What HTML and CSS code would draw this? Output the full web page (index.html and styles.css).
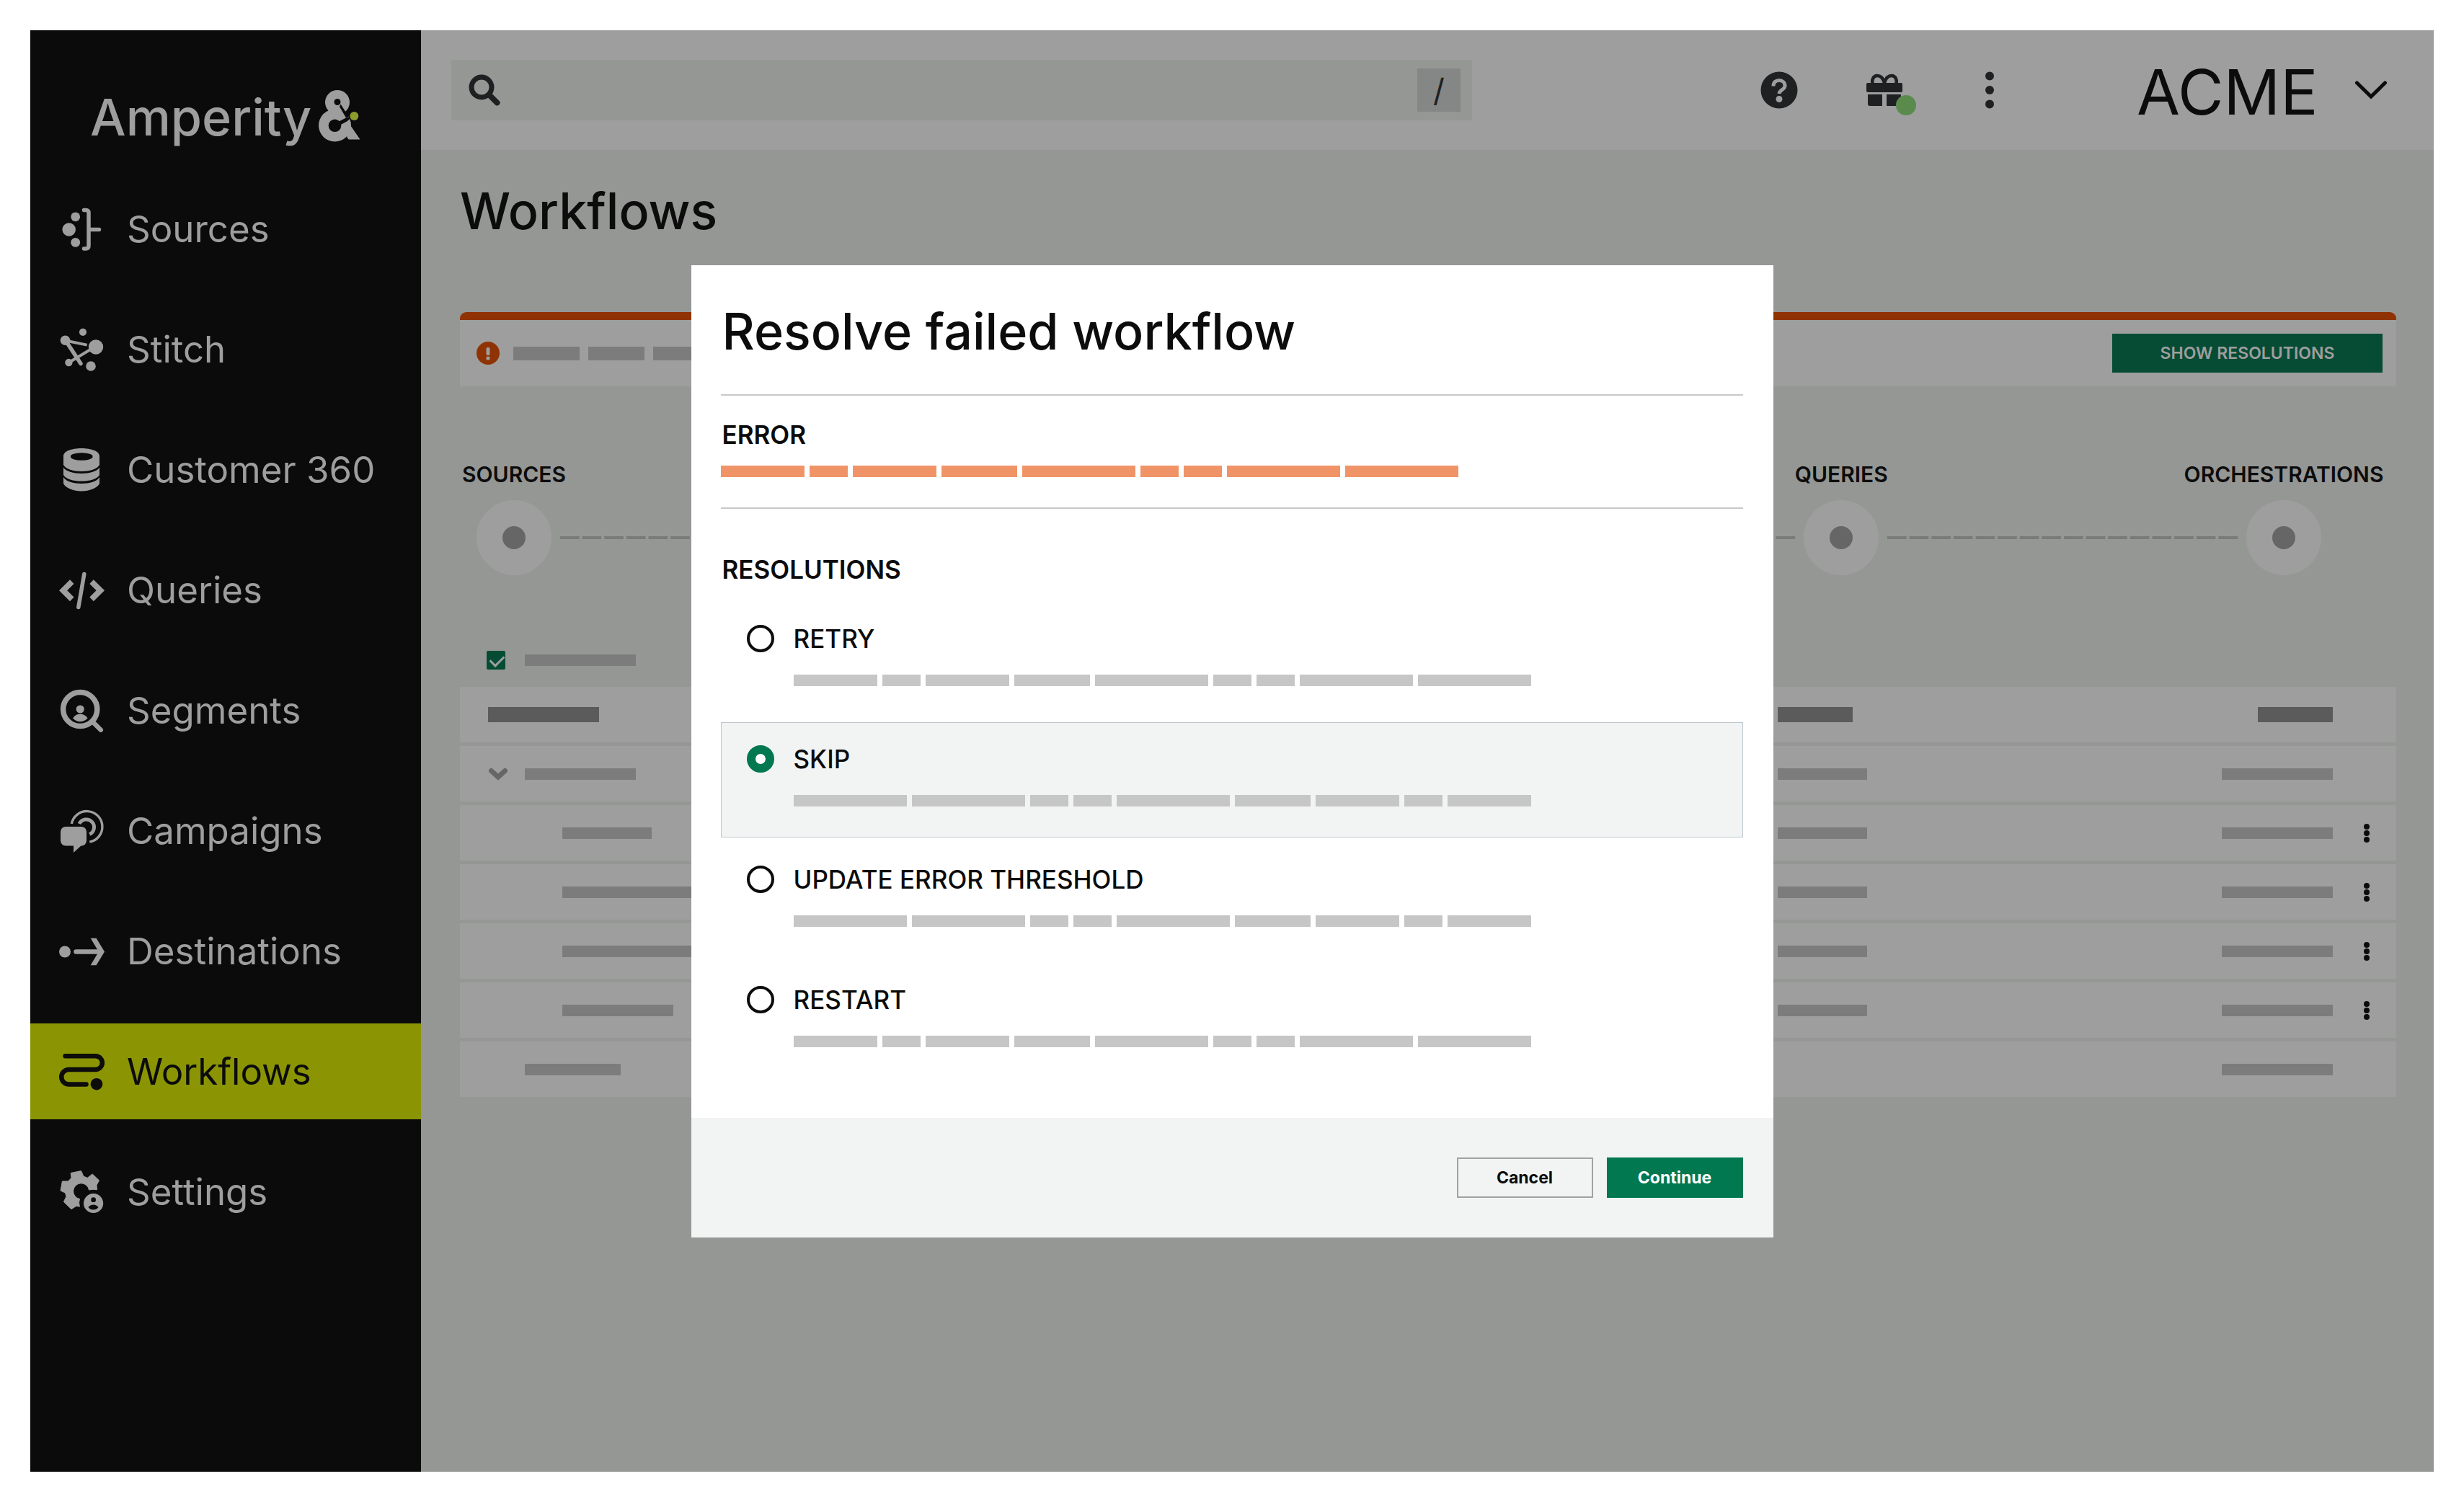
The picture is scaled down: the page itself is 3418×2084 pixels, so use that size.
FILE: index.html
```html
<!DOCTYPE html>
<html lang="en">
<head>
<meta charset="utf-8">
<title>Workflows</title>
<link rel="stylesheet" href="styles.css">
</head>
<body>
<div class="app">
  <aside class="sidebar">
    <a class="brand" href="#">
      <span class="brand-name">Amperity</span>
      <svg class="brand-mark" viewBox="0 0 58 72" aria-hidden="true">
        <circle cx="26" cy="17" r="17" fill="#9e9e9e"/>
        <circle cx="22.5" cy="49" r="22.5" fill="#9e9e9e"/>
        <path d="M9 17L14 30L30 42L37.500 38.600L28 20Z" fill="#9e9e9e"/>
        <path d="M29 48L40 43L57.500 68.500H42.500Q40.500 68.500 39 64L30 58Z" fill="#9e9e9e"/>
        <path d="M30.500 19.500L37 29.500L42 37L38 38.500L29 23Z" fill="#0b0b0b"/>
        <circle cx="26" cy="16.500" r="4.500" fill="#0b0b0b"/>
        <circle cx="22.500" cy="49.300" r="8.800" fill="#0b0b0b"/>
        <path d="M27 44L38 38.500L46 37L40 43L29 49Z" fill="#0b0b0b"/>
        <circle cx="49.300" cy="36" r="6" fill="#8c9c2d"/>
      </svg>
    </a>
    <nav class="nav">
      <a class="nav-item" href="#">
        <svg class="nav-icon" viewBox="0 0 64 64" fill="currentColor" aria-hidden="true"><circle cx="14.700" cy="32.500" r="9.300"/><circle cx="23.700" cy="14.800" r="6.400"/><circle cx="23.700" cy="50.400" r="6.400"/><path d="M35.500 5.500H38Q42 5.500 42 9.500V55Q42 59 38 59H35.500M42 32.500H56.500" fill="none" stroke="currentColor" stroke-width="5.500" stroke-linecap="round"/></svg>
        <span>Sources</span></a>
      <a class="nav-item" href="#">
        <svg class="nav-icon" viewBox="0 0 64 64" fill="currentColor" aria-hidden="true"><circle cx="34" cy="7.800" r="5.100"/><circle cx="9.500" cy="19.200" r="6.800"/><circle cx="52" cy="28.500" r="10.200"/><circle cx="14.400" cy="50" r="5.200"/><circle cx="45" cy="55" r="6.800"/><path d="M12 20L39.700 25.600M17 48.500L46 31" stroke="currentColor" stroke-width="4"/><path d="M12 22.500L31 51.500" stroke="currentColor" stroke-width="5.500" stroke-linecap="round"/></svg>
        <span>Stitch</span></a>
      <a class="nav-item" href="#">
        <svg class="nav-icon" viewBox="0 0 64 64" fill="currentColor" aria-hidden="true"><path fill-rule="evenodd" d="M7 13C7 6 18 2 32 2S57 6 57 13V25C54 31 43 34 32 34S10 31 7 25ZM17 13.500A15.300 4.800 0 1 0 47.500 13.500A15.300 4.800 0 1 0 17 13.500Z"/><path d="M7 28.500C10 34 21 37 32 37S54 34 57 28.500V39C54 45 43 47.500 32 47.500S10 45 7 39Z"/><path d="M7 42C10 48 21 51 32 51S54 48 57 42V51C54 57 43 61.500 32 61.500S10 57 7 51Z"/></svg>
        <span>Customer 360</span></a>
      <a class="nav-item" href="#">
        <svg class="nav-icon" viewBox="0 0 64 64" fill="currentColor" aria-hidden="true"><path d="M1 32.300L16 17.300L21.500 23L12.200 32.300L21.500 41.600L16 47.300ZM64 32.300L48.800 17.300L43.300 23L52.600 32.300L43.300 41.600L48.800 47.300Z"/><path d="M35.800 9.500L27.800 55.500" stroke="currentColor" stroke-width="5.500" stroke-linecap="round"/></svg>
        <span>Queries</span></a>
      <a class="nav-item" href="#">
        <svg class="nav-icon" viewBox="0 0 64 64" fill="currentColor" aria-hidden="true"><circle cx="30.200" cy="30" r="23.600" fill="none" stroke="currentColor" stroke-width="7.500"/><path d="M48 48L58.800 58.700" stroke="currentColor" stroke-width="6.500" stroke-linecap="round"/><circle cx="30.200" cy="30" r="5.600"/><path d="M20 42.500C23 38.500 26 36.800 30 36.800S38 38.500 40.500 42.500C38 45.500 34 47.200 30 47.200S23 45.500 20 42.500Z"/></svg>
        <span>Segments</span></a>
      <a class="nav-item" href="#">
        <svg class="nav-icon" viewBox="0 0 64 64" fill="currentColor" aria-hidden="true"><rect x="3" y="26" width="36" height="26.500" rx="7"/><path d="M21 50V62L32 52Z"/><path d="M18.300 22A21.500 21.500 0 1 1 43.300 47.200" fill="none" stroke="currentColor" stroke-width="3.400"/><path d="M29 22A10.800 10.800 0 1 1 43.300 36.500" fill="none" stroke="currentColor" stroke-width="5"/></svg>
        <span>Campaigns</span></a>
      <a class="nav-item" href="#">
        <svg class="nav-icon" viewBox="0 0 64 64" fill="currentColor" aria-hidden="true"><circle cx="9" cy="32.500" r="8"/><path d="M24.500 32.500H56" stroke="currentColor" stroke-width="6.500" stroke-linecap="round"/><path d="M44.700 13.700H52.600L64 32.500L52.600 51.300H44.700L55.800 32.500Z"/></svg>
        <span>Destinations</span></a>
      <a class="nav-item is-active" href="#" aria-current="page">
        <svg class="nav-icon" viewBox="0 0 64 64" fill="none" stroke="currentColor" stroke-width="6.500" stroke-linecap="round" aria-hidden="true"><path d="M9.500 10.200H51.500A9.400 9.400 0 0 1 51.500 29H14.500A10.200 10.200 0 0 0 14.500 49.500H38.500"/><circle cx="53" cy="49.200" r="8.300" fill="currentColor" stroke="none"/></svg>
        <span>Workflows</span></a>
      <a class="nav-item" href="#">
        <svg class="nav-icon" viewBox="0 0 64 64" fill="currentColor" stroke-linejoin="round" aria-hidden="true"><path d="M17.200 5.500L31.500 2.600L35 10.300L40.400 12.200L47.200 7L56.500 15.800L53 22.500L53.600 28.800Q48 27.500 42.500 29A11 11 0 1 0 29.500 41.600Q27.500 47 29.500 52L24.700 51.400L18 55.700L7.400 45.500L11 38L9.400 33L3 30L5.400 17H13.600L18 12.300Z" stroke="currentColor" stroke-width="1"/><path fill-rule="evenodd" d="M35 47.500A13.600 13.600 0 1 0 62.200 47.500A13.600 13.600 0 1 0 35 47.500ZM45.200 42.700A3.400 3.400 0 1 1 52 42.700A3.400 3.400 0 1 1 45.200 42.700ZM41.500 53Q44 49.500 48.500 49.500T55.500 53Q53 56.500 48.500 56.500T41.500 53Z"/></svg>
        <span>Settings</span></a>
    </nav>
  </aside>

  <div class="content">
    <header class="topbar">
      <label class="search">
        <svg class="search-icon" viewBox="0 0 44 44" fill="none" stroke="currentColor" aria-hidden="true"><circle cx="18" cy="18" r="14" stroke-width="7"/><path d="M29 29L39.500 39.500" stroke-width="8" stroke-linecap="round"/></svg>
        <input class="search-input" type="search" aria-label="Search">
        <kbd class="search-key">/</kbd>
      </label>
      <div class="tools">
        <button class="tool" type="button" aria-label="Help">
          <svg viewBox="0 0 52 52" aria-hidden="true"><circle cx="26" cy="26" r="25.500" fill="#1e2021"/><path d="M18 20.500C18 15 21.500 12.500 26 12.500S34 15.500 34 20C34 25.500 26.500 25.500 26 31" fill="none" stroke="#9e9e9e" stroke-width="5"/><circle cx="26" cy="38.500" r="4.500" fill="#9e9e9e"/></svg>
        </button>
        <button class="tool" type="button" aria-label="What's new">
          <svg viewBox="0 0 52 52" aria-hidden="true"><path d="M26 20V16C24 9 20 6 16 6C10 6 8 13 10 18M26 20V16C28 9 32 6 36 6C42 6 44 13 42 18" fill="none" stroke="#1e2021" stroke-width="4.500"/><rect x="1" y="16" width="50" height="13" rx="2" fill="#1e2021"/><path d="M3 32H23V48H6Q3 48 3 45ZM29 32H49V45Q49 48 46 48H29Z" fill="#1e2021"/></svg>
          <span class="tool-badge"></span>
        </button>
        <button class="tool" type="button" aria-label="More">
          <svg viewBox="0 0 52 52" fill="#1e2021" aria-hidden="true"><circle cx="26" cy="6.500" r="6"/><circle cx="26" cy="26" r="6"/><circle cx="26" cy="45.500" r="6"/></svg>
        </button>
      </div>
      <button class="tenant" type="button">
        <span class="tenant-name">ACME</span>
        <svg class="tenant-arrow" viewBox="0 0 46 28" fill="none" stroke="currentColor" stroke-width="5" stroke-linecap="round" aria-hidden="true"><path d="M3.500 4L23 23L42.500 4"/></svg>
      </button>
    </header>

    <main class="main">
      <h1 class="page-title">Workflows</h1>

      <section class="alert">
        <svg class="alert-icon" viewBox="0 0 32 32" aria-hidden="true"><circle cx="16" cy="16" r="16" fill="#8f3305"/><rect x="13.500" y="8" width="5" height="11" rx="2" fill="#9e9e9e"/><circle cx="16" cy="23" r="2.600" fill="#9e9e9e"/></svg>
        <div class="alert-text"><i class="bar w-92"></i><i class="bar w-78"></i><i class="bar w-92"></i></div>
        <button class="alert-action" type="button">SHOW RESOLUTIONS</button>
      </section>

      <div class="stages">
        <div class="stage"><span class="stage-name">SOURCES</span><i class="stage-node"></i></div>
        <i class="stage-link"></i>
        <div class="stage"><i class="stage-node"></i></div>
        <i class="stage-link"></i>
        <div class="stage"><i class="stage-node"></i></div>
        <i class="stage-link"></i>
        <div class="stage"><span class="stage-name">QUERIES</span><i class="stage-node"></i></div>
        <i class="stage-link"></i>
        <div class="stage"><span class="stage-name">ORCHESTRATIONS</span><i class="stage-node"></i></div>
      </div>

      <label class="filter"><input class="filter-box" type="checkbox" aria-label="Filter runs" checked><i class="bar w-154"></i></label>

      <table class="runs">
        <colgroup><col><col class="col-status"><col class="col-time"><col class="col-menu"></colgroup>
        <thead>
          <tr><th class="level-0"><i class="bar bar-head w-154"></i></th><th><i class="bar bar-head w-104"></i></th><th class="end"><i class="bar bar-head w-104"></i></th><th></th></tr>
        </thead>
        <tbody>
          <tr><td class="level-0"><div class="group"><svg class="group-arrow" viewBox="0 0 28 18" fill="none" stroke="#666" stroke-width="7" stroke-linecap="round" aria-hidden="true"><path d="M4.500 4.500L14 13L23.500 4.500"/></svg><i class="bar w-154"></i></div></td><td><i class="bar w-124"></i></td><td class="end"><i class="bar w-154"></i></td><td></td></tr>
          <tr><td class="level-2"><i class="bar w-124"></i></td><td><i class="bar w-124"></i></td><td class="end"><i class="bar w-154"></i></td><td class="menu"><button class="row-menu" type="button" aria-label="Row actions"><i></i><i></i><i></i></button></td></tr>
          <tr><td class="level-2"><i class="bar w-220"></i></td><td><i class="bar w-124"></i></td><td class="end"><i class="bar w-154"></i></td><td class="menu"><button class="row-menu" type="button" aria-label="Row actions"><i></i><i></i><i></i></button></td></tr>
          <tr><td class="level-2"><i class="bar w-220"></i></td><td><i class="bar w-124"></i></td><td class="end"><i class="bar w-154"></i></td><td class="menu"><button class="row-menu" type="button" aria-label="Row actions"><i></i><i></i><i></i></button></td></tr>
          <tr><td class="level-2"><i class="bar w-154"></i></td><td><i class="bar w-124"></i></td><td class="end"><i class="bar w-154"></i></td><td class="menu"><button class="row-menu" type="button" aria-label="Row actions"><i></i><i></i><i></i></button></td></tr>
          <tr><td class="level-1"><i class="bar w-133"></i></td><td></td><td class="end"><i class="bar w-154"></i></td><td></td></tr>
        </tbody>
      </table>
    </main>
  </div>
</div>

<div class="overlay">
  <form class="modal" role="dialog" aria-modal="true" aria-labelledby="modal-title">
    <div class="modal-body">
      <h2 class="modal-title" id="modal-title">Resolve failed workflow</h2>
      <section class="error">
        <h3 class="section-title">ERROR</h3>
        <div class="words words-error"><i class="w-116"></i><i class="w-53"></i><i class="w-116"></i><i class="w-105"></i><i class="w-157"></i><i class="w-53"></i><i class="w-53"></i><i class="w-157"></i><i class="w-157"></i></div>
      </section>
      <section class="resolutions" role="radiogroup" aria-labelledby="resolutions-title">
        <h3 class="section-title" id="resolutions-title">RESOLUTIONS</h3>
        <div class="options">
          <label class="option"><input class="radio" type="radio" name="resolution"><span>RETRY</span>
            <span class="words"><i class="w-116"></i><i class="w-53"></i><i class="w-116"></i><i class="w-105"></i><i class="w-157"></i><i class="w-53"></i><i class="w-53"></i><i class="w-157"></i><i class="w-157"></i></span></label>
          <label class="option is-selected"><input class="radio" type="radio" name="resolution" checked><span>SKIP</span>
            <span class="words"><i class="w-157"></i><i class="w-157"></i><i class="w-53"></i><i class="w-53"></i><i class="w-157"></i><i class="w-105"></i><i class="w-116"></i><i class="w-53"></i><i class="w-116"></i></span></label>
          <label class="option"><input class="radio" type="radio" name="resolution"><span>UPDATE ERROR THRESHOLD</span>
            <span class="words"><i class="w-157"></i><i class="w-157"></i><i class="w-53"></i><i class="w-53"></i><i class="w-157"></i><i class="w-105"></i><i class="w-116"></i><i class="w-53"></i><i class="w-116"></i></span></label>
          <label class="option"><input class="radio" type="radio" name="resolution"><span>RESTART</span>
            <span class="words"><i class="w-116"></i><i class="w-53"></i><i class="w-116"></i><i class="w-105"></i><i class="w-157"></i><i class="w-53"></i><i class="w-53"></i><i class="w-157"></i><i class="w-157"></i></span></label>
        </div>
      </section>
    </div>
    <footer class="modal-footer">
      <button class="button" type="button">Cancel</button>
      <button class="button button-primary" type="button">Continue</button>
    </footer>
  </form>
</div>
</body>
</html>
```
FILE: styles.css
```css
* { box-sizing: border-box; }

body {
  margin: 0;
  padding: 42px;
  background: #fff;
  color: #0c0c0c;
  font-family: Inter, "Liberation Sans", sans-serif;
}

h1, h2, h3 { margin: 0; font-weight: 500; }
button { padding: 0; border: 0; background: none; color: inherit; font: inherit; }
a { color: inherit; text-decoration: none; }
svg { display: block; }

.app { display: flex; min-height: calc(100vh - 84px); background: #959795; }

/* Sidebar */
.sidebar { flex: 0 0 542px; background: #0b0b0b; color: #9e9e9e; }
.brand { display: flex; align-items: center; gap: 10px; padding: 81px 0 52px 83px; }
.brand-name { padding-top: 4px; font-size: 70px; line-height: 72px; font-weight: 500; }
.brand-mark { width: 58px; height: 72px; }
.nav { display: flex; flex-direction: column; gap: 34px; }
.nav-item { display: flex; align-items: center; gap: 31px; height: 133px; padding-left: 39px; font-size: 51px; line-height: 60px; }
.nav-item.is-active { background: #8b9504; color: #0c0c0c; }
.nav-icon { width: 64px; height: 64px; }

/* Top bar */
.content { flex: 1; min-width: 0; }
.topbar { display: flex; align-items: center; height: 166px; padding: 0 64px 0 42px; background: #9e9e9e; }
.search { display: flex; align-items: center; flex: 0 1 1416px; height: 84px; margin-right: auto; padding: 0 16px 0 24px; background: #959795; color: #1e2021; }
.search-icon { width: 44px; height: 44px; }
.search-input { flex: 1; min-width: 0; height: 60px; border: 0; outline: 0; background: none; font: inherit; font-size: 40px; }
.search-key { width: 60px; background: #848786; font-family: inherit; font-size: 44px; line-height: 60px; text-align: center; }
.tools { display: flex; gap: 94px; margin-right: 178px; }
.tool { position: relative; width: 52px; height: 52px; }
.tool-badge { position: absolute; right: -18px; bottom: -9px; width: 28px; height: 28px; border-radius: 50%; background: #5a8b4d; }
.tenant { display: flex; align-items: center; justify-content: space-between; min-width: 348px; gap: 40px; font-size: 87px; line-height: 100px; }
.tenant-name { padding-top: 6px; }
.tenant-arrow { width: 46px; height: 28px; }

/* Page */
.main { padding: 45px 52px 45px 54px; }
.page-title { font-size: 70px; line-height: 80px; }

.bar { display: block; height: 16px; background: #7c7c7c; }
.bar-head { height: 21px; background: #5b5b5b; }
.w-53 { width: 53px; }
.w-78 { width: 78px; }
.w-92 { width: 92px; }
.w-104 { width: 104px; }
.w-105 { width: 105px; }
.w-116 { width: 116px; }
.w-124 { width: 124px; }
.w-133 { width: 133px; }
.w-154 { width: 154px; }
.w-157 { width: 157px; }
.w-220 { width: 220px; }

.alert { display: flex; align-items: center; height: 103px; margin-top: 100px; padding: 0 19px 0 23px; border-top: 11px solid #8f3305; border-radius: 9px 9px 0 0; background: #9e9e9e; }
.alert-icon { width: 32px; height: 32px; }
.alert-text { display: flex; gap: 12px; margin-left: 19px; }
.alert-text .bar { height: 19px; }
.alert-action { width: 375px; height: 54px; margin-left: auto; background: #064c35; color: #9e9e9e; font-size: 23px; font-weight: 600; }

.stages { display: flex; align-items: flex-end; margin-top: 106px; padding: 0 104px 0 23px; }
.stage { display: flex; flex-direction: column; align-items: center; gap: 20px; width: 104px; }
.stage-name { font-size: 30px; line-height: 32px; font-weight: 600; white-space: nowrap; }
.stage-node { width: 104px; height: 104px; border: 36px solid #9e9e9e; border-radius: 50%; background: #666; }
.stage-link { flex: 1; height: 4px; margin: 0 8px 50px 12px; background: linear-gradient(90deg, #7a7a7a 86%, transparent 86%) 0 0 / 31px 4px round; }

.filter { display: flex; align-items: center; gap: 27px; margin-top: 105px; padding-left: 37px; }
.filter-box { position: relative; width: 26px; height: 26px; margin: 0; border-radius: 2px; background: #054c35; appearance: none; }
.filter-box::after { content: ""; position: absolute; left: 5px; top: 6px; width: 16px; height: 9px; border: solid #9e9e9e; border-width: 0 0 3px 3px; rotate: -45deg; }

.runs { width: 100%; margin-top: 19px; border-collapse: separate; border-spacing: 0 5px; table-layout: fixed; }
.runs tr { height: 77px; background: #9e9e9e; }
.runs th, .runs td { padding: 0; vertical-align: middle; }
.col-status { width: 597px; }
.col-time { width: 173px; }
.col-menu { width: 88px; }
.runs .level-0 { padding-left: 39px; }
.runs .level-1 { padding-left: 90px; }
.runs .level-2 { padding-left: 142px; }
.end .bar { margin-left: auto; }
.group { display: flex; align-items: center; gap: 23px; }
.group-arrow { width: 28px; height: 18px; }
.row-menu { display: flex; flex-direction: column; gap: 1px; margin: 0 auto; padding-left: 6px; }
.row-menu i { width: 8px; height: 8px; border-radius: 50%; background: #0c0c0c; }

/* Dialog */
.overlay { position: fixed; inset: 0; display: grid; place-items: center; }
.modal { width: 1501px; max-width: 100%; background: #fff; }
.modal-body { padding: 52px 42px 55px 41px; }
.modal-title { padding: 0 0 47px 2px; border-bottom: 2px solid #c8c8c8; font-size: 70px; line-height: 80px; }
.section-title { padding-left: 2px; font-size: 35px; line-height: 40px; font-weight: 600; }
.words { display: flex; gap: 7px; }
.words i { height: 16px; background: #c6c6c6; }
.words-error i { background: #f09467; }
.error { padding: 34px 0 42px; border-bottom: 2px solid #c8c8c8; }
.error .words { margin-top: 23px; }
.resolutions { padding-top: 64px; }
.options { display: flex; flex-direction: column; gap: 7px; margin-top: 25px; }
.option { display: grid; grid-template-columns: 38px 1fr; align-items: center; gap: 31px 27px; padding: 31px 35px 42px; border: 1px solid transparent; font-size: 35px; line-height: 38px; font-weight: 500; }
.option .words { grid-column: 2; }
.option.is-selected { border-color: #bdc7cf; background: #f1f4f3; }
.radio { width: 38px; height: 38px; margin: 0; border: 4px solid #0c0c0c; border-radius: 50%; background: #fff; appearance: none; }
.radio:checked { border: 12px solid #017850; }
.modal-footer { display: flex; justify-content: flex-end; gap: 19px; padding: 55px 42px; background: #f1f4f3; }
.button { width: 189px; height: 56px; border: 2px solid #a1a3a2; font-size: 23px; font-weight: 700; }
.button-primary { border-color: #017850; background: #017850; color: #fff; }
```
